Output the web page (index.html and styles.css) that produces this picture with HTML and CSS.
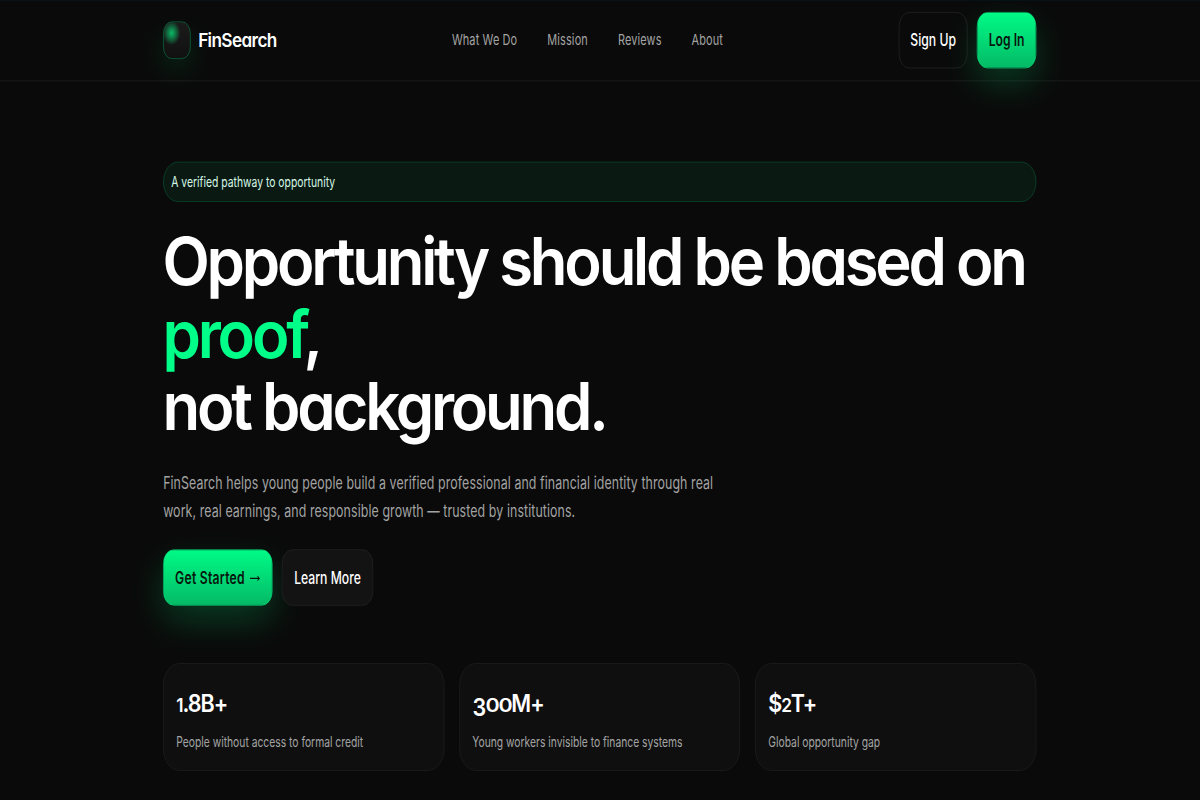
FILE: index.html
```html
<!DOCTYPE html>
<html lang="en">
<head>
  <meta charset="UTF-8" />
  <meta name="viewport" content="width=device-width, initial-scale=1.0"/>
  <title>FinSearch</title>
  <link rel="stylesheet" href="styles.css">
</head>
<body>
  <div class="page">
    <header>
      <div class="container nav">
        <div class="brand">
          <div class="logo-mark"></div>
          <span class="logo-text">FinSearch</span>
        </div>
        <nav class="nav-links">
          <a href="#what">What We Do</a>
          <a href="#mission">Mission</a>
          <a href="#reviews">Reviews</a>
          <a href="#about">About</a>
        </nav>
        <div class="nav-actions">
          <a class="btn btn-ghost btn-signup" href="#signup">Sign Up</a>
          <a class="btn btn-primary btn-login" href="#login">Log In</a>
        </div>
      </div>
    </header>

    <main class="container">
      <div class="badge">A verified pathway to opportunity</div>
      <h1>Opportunity should be based on<br><span class="accent">proof</span>,<br>not background.</h1>
      <p class="lead">FinSearch helps young people build a verified professional and financial identity through real<br>work, real earnings, and responsible growth — trusted by institutions.</p>

      <div class="cta">
        <a class="btn btn-primary btn-start" href="#start">Get Started
          <svg class="arrow" viewBox="0 0 18 12"><path d="M1 6h15M13 3.5l3 2.5-3 2.5"/></svg>
        </a>
        <a class="btn btn-dark btn-learn" href="#learn">Learn More</a>
      </div>

      <div class="stats">
        <div class="stat">
          <div class="stat-number"><span class="low">1</span>.8B+</div>
          <div class="stat-label">People without access to formal credit</div>
        </div>
        <div class="stat">
          <div class="stat-number"><span class="drop">3</span><span class="low zeros">00</span>M+</div>
          <div class="stat-label">Young workers invisible to finance systems</div>
        </div>
        <div class="stat">
          <div class="stat-number">$<span class="low">2</span>T+</div>
          <div class="stat-label">Global opportunity gap</div>
        </div>
      </div>
    </main>
  </div>
</body>
</html>
```

FILE: styles.css
```css
* {
  box-sizing: border-box;
  margin: 0;
  padding: 0;
}

html {
  overflow: hidden;
  background-color: #0a0a0a;
}

body {
  background-color: #0a0a0a;
  color: #fff;
  font-family: Inter, sans-serif;
  width: 1200px;
  height: 800px;
  overflow: hidden;
}

/* 1920x935 layout fitted into the window */
.page {
  width: 1920px;
  height: 935px;
  margin: 0 -720px -135px 0;
  transform: scale(0.625, 0.8556);
  transform-origin: 0 0;
  border-top: 1px solid #07131c;
}

.container {
  width: 1397px;
  margin-left: 261px;
}

header {
  height: 94px;
  border-bottom: 1px solid #1f1f1f;
}

.nav {
  height: 92px;
  display: grid;
  grid-template-columns: 462px 1fr auto;
  align-items: center;
}

.brand {
  display: flex;
  align-items: center;
  gap: 12px;
}

.logo-mark {
  width: 44px;
  height: 44px;
  border-radius: 14px;
  border: 1px solid #0d6b42;
  background: radial-gradient(circle at 30% 30%, #0bb865 0, rgba(11, 184, 101, 0.6) 6px, rgba(11, 184, 101, 0) 14px), linear-gradient(#1b1b1b, #111);
  box-shadow: 0 14px 40px rgba(0, 255, 136, 0.12);
}

.logo-text {
  font-weight: 600;
  font-size: 22px;
  letter-spacing: -0.8px;
  white-space: nowrap;
  font-feature-settings: "cv11";
  transform: scaleX(1.25);
  transform-origin: 0 50%;
}

.nav-links {
  display: flex;
  gap: 48px;
  padding-bottom: 1px;
}

.nav-links a {
  color: #a3a3a3;
  text-decoration: none;
  font-size: 17.5px;
  letter-spacing: 0.2px;
  white-space: nowrap;
}

.nav-actions,
.cta {
  display: flex;
  gap: 15px;
}

.btn {
  height: 66px;
  display: flex;
  align-items: center;
  justify-content: center;
  border-radius: 17px;
  border: 1px solid #242424;
  color: #fff;
  font-size: 19.5px;
  font-weight: 500;
  text-decoration: none;
  white-space: nowrap;
}

.btn-primary {
  background: linear-gradient(#00fa86, #04ba66);
  border-color: #05d877;
  color: #06170e;
  font-weight: 600;
  box-shadow: 0 18px 50px rgba(0, 255, 136, 0.2);
}

.btn-dark {
  background-color: #131313;
}

.btn-signup {
  width: 110px;
}

.btn-login {
  width: 95px;
}

.btn-start {
  width: 175px;
  gap: 7px;
  letter-spacing: 0.4px;
}

.btn-learn {
  width: 146px;
}

.arrow {
  width: 18px;
  height: 12px;
  margin-top: 2px;
  fill: none;
  stroke: #06170e;
  stroke-width: 1.2;
}

.badge {
  height: 47px;
  margin-top: 94px;
  padding-left: 12px;
  display: flex;
  align-items: center;
  border: 1px solid #0a4a2e;
  border-radius: 24px;
  background-color: #0a1a13;
  color: #d5f7e5;
  font-size: 16.6px;
}

h1 {
  width: 1080px;
  margin-top: 27px;
  margin-left: -1px;
  font-weight: 600;
  font-size: 77px;
  line-height: 85px;
  letter-spacing: -4px;
  white-space: nowrap;
  font-feature-settings: "cv11";
  transform: scaleX(1.279);
  transform-origin: 0 0;
}

.accent {
  color: #00ff88;
}

.lead {
  margin-top: 30px;
  color: #a3a3a3;
  font-size: 19.8px;
  letter-spacing: 0.16px;
  line-height: 32.5px;
  white-space: nowrap;
}

.cta {
  margin-top: 29px;
}

.stats {
  margin-top: 67px;
  display: grid;
  grid-template-columns: repeat(3, 1fr);
  gap: 24px;
}

.stat {
  height: 126px;
  padding: 28px 20px 0;
  border: 1px solid #1f1f1f;
  border-radius: 26px;
  background-color: #0f0f0f;
}

.stat-number {
  height: 36px;
  font-weight: 600;
  font-size: 28px;
  line-height: 36px;
  letter-spacing: -1.3px;
  transform: scaleX(1.23);
  transform-origin: 0 0;
}

/* old-style figures */
.low {
  font-size: 0.8em;
}

.zeros {
  display: inline-block;
  line-height: 1;
  margin-right: 7px;
  transform: scaleX(1.25);
  transform-origin: 0 0;
}

.drop {
  display: inline-block;
  line-height: 1;
  vertical-align: -0.18em;
}

.stat-label {
  margin-top: 15px;
  color: #a3a3a3;
  font-size: 16.5px;
  line-height: 24px;
}
```
